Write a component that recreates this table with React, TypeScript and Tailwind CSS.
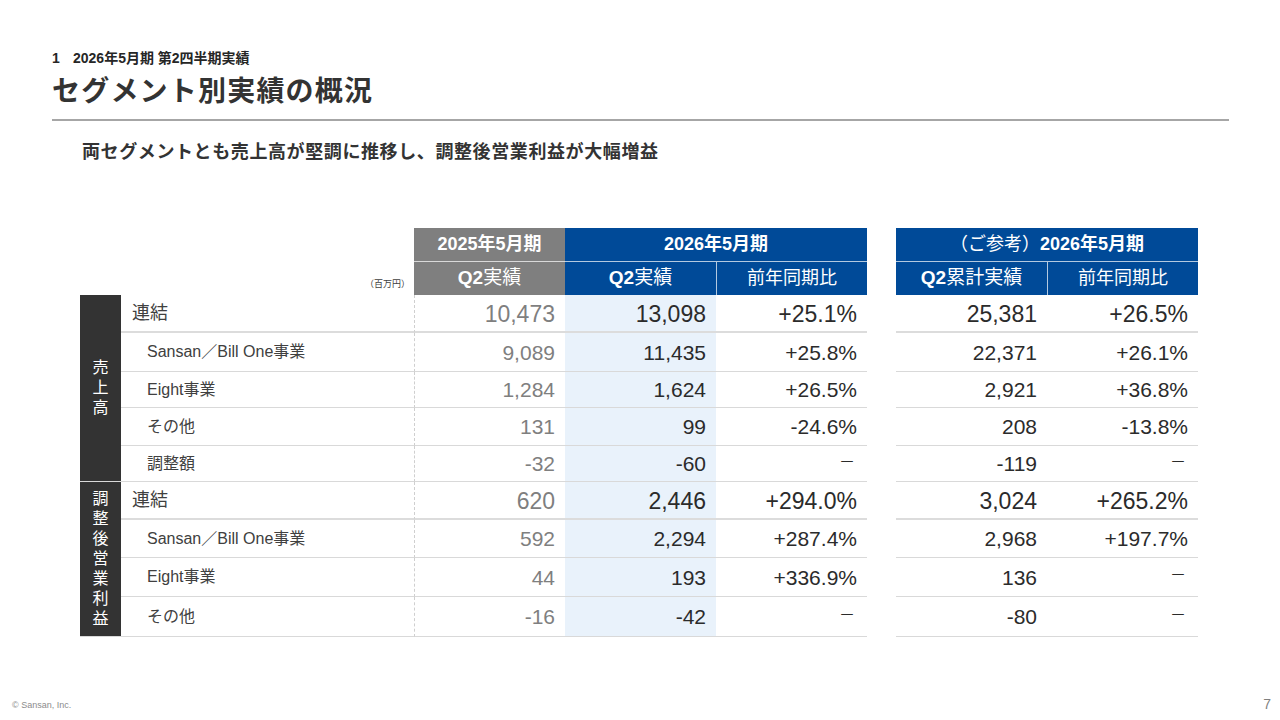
const font = { fontFamily: '"Liberation Sans", "Noto Sans CJK JP", sans-serif' };

type Row = {
  label: string;
  main?: boolean;
  h: string;
  v: string[];
};

const sales: Row[] = [
  { label: '連結', main: true, h: 'h-[38px]', v: ['10,473', '13,098', '+25.1%', '25,381', '+26.5%'] },
  { label: 'Sansan／Bill One事業', h: 'h-[39px]', v: ['9,089', '11,435', '+25.8%', '22,371', '+26.1%'] },
  { label: 'Eight事業', h: 'h-[36px]', v: ['1,284', '1,624', '+26.5%', '2,921', '+36.8%'] },
  { label: 'その他', h: 'h-[38px]', v: ['131', '99', '-24.6%', '208', '-13.8%'] },
  { label: '調整額', h: 'h-[36px]', v: ['-32', '-60', '－', '-119', '－'] }
];

const profit: Row[] = [
  { label: '連結', main: true, h: 'h-[38px]', v: ['620', '2,446', '+294.0%', '3,024', '+265.2%'] },
  { label: 'Sansan／Bill One事業', h: 'h-[38px]', v: ['592', '2,294', '+287.4%', '2,968', '+197.7%'] },
  { label: 'Eight事業', h: 'h-[39px]', v: ['44', '193', '+336.9%', '136', '－'] },
  { label: 'その他', h: 'h-[40px]', v: ['-16', '-42', '－', '-80', '－'] }
];

function Val({ text, main, className }: { text: string; main?: boolean; className: string }) {
  const dash = text === '－';
  return (
    <div className={`w-[151px] flex items-center justify-end pr-[10px] ${className}`}>
      {dash ? (
        <span className="text-[16px] mb-[4px] pr-[2px]">－</span>
      ) : (
        <span className={main ? 'text-[23px] pt-[3px]' : 'text-[21px] pt-[1px]'}>{text}</span>
      )}
    </div>
  );
}

function DataRow({ row }: { row: Row }) {
  const line = row.main ? 'border-b-2 border-[#dcdcdc]' : 'border-b border-[#d9d9d9]';
  return (
    <div className={`flex ${row.h}`}>
      <div
        className={`w-[293px] flex items-center ${line} ${
          row.main ? 'pl-[11px] text-[18px]' : 'pl-[26px] text-[16px]'
        } text-[#404040]`}
      >
        {row.label}
      </div>
      <Val
        text={row.v[0]}
        main={row.main}
        className={`${line} border-l border-l-[#cfcfcf] [border-left-style:dashed] text-[#7f7f7f]`}
      />
      <Val text={row.v[1]} main={row.main} className={`${line} bg-[#e9f2fb] text-[#2b2b2b]`} />
      <Val text={row.v[2]} main={row.main} className={`${line} text-[#2b2b2b]`} />
      <div className="w-[29px]" />
      <Val text={row.v[3]} main={row.main} className={`${line} text-[#2b2b2b]`} />
      <Val text={row.v[4]} main={row.main} className={`${line} text-[#2b2b2b]`} />
    </div>
  );
}

function Group({ title, rows }: { title: string; rows: Row[] }) {
  return (
    <div className="flex">
      <div className="w-[41px] bg-[#333333] border-b border-[#d9d9d9] flex items-center justify-center">
        <div className="flex flex-col items-center text-white text-[16px] leading-[20px]">
          {title.split('').map((c, i) => (
            <span key={i}>{c}</span>
          ))}
        </div>
      </div>
      <div className="flex flex-col">
        {rows.map((r, i) => (
          <DataRow key={i} row={r} />
        ))}
      </div>
    </div>
  );
}

export default function App() {
  return (
    <div style={font} className="w-[1280px] h-[720px] bg-white flex flex-col text-[#333333] overflow-hidden">
      <div className="pt-[49px] pl-[52px] pr-[51px]">
        <div className="text-[14px] leading-[18px] font-bold text-[#262626] flex">
          <span className="w-[21px]">1</span>
          <span>2026年5月期 第2四半期実績</span>
        </div>
        <h1 className="mt-[7px] text-[28px] leading-[36px] font-bold tracking-[1.2px] text-[#333333]">
          セグメント別実績の概況
        </h1>
        <div className="mt-[9px] h-[2px] bg-[#a6a6a6]" />
        <p className="mt-[19px] ml-[30px] text-[18px] leading-[24px] font-bold tracking-[0.6px] text-[#333333]">
          両セグメントとも売上高が堅調に推移し、調整後営業利益が大幅増益
        </p>

        <div className="mt-[64px] ml-[28px] flex flex-col">
          <div className="flex text-white">
            <div className="w-[334px] flex items-end justify-end pr-[4px] pb-[4px] text-[9px] text-[#404040]">
              （百万円）
            </div>
            <div className="w-[151px] flex flex-col bg-[#7f7f7f]">
              <div className="h-[33px] flex items-center justify-center text-[18px] font-bold">2025年5月期</div>
              <div className="h-[1px] bg-white/70" />
              <div className="h-[33px] flex items-center justify-center text-[19px]">
                <span className="font-bold">Q2</span>実績
              </div>
            </div>
            <div className="w-[302px] flex flex-col bg-[#004a98]">
              <div className="h-[33px] flex items-center justify-center text-[18px] font-bold">2026年5月期</div>
              <div className="h-[1px] bg-white/70" />
              <div className="h-[33px] flex">
                <div className="w-[151px] flex items-center justify-center text-[19px]">
                  <span className="font-bold">Q2</span>実績
                </div>
                <div className="w-[151px] border-l border-white/70 flex items-center justify-center text-[18px]">
                  前年同期比
                </div>
              </div>
            </div>
            <div className="w-[29px]" />
            <div className="w-[302px] flex flex-col bg-[#004a98]">
              <div className="h-[33px] flex items-center justify-center text-[18px] font-bold">
                <span className="font-normal">（ご参考）</span>2026年5月期
              </div>
              <div className="h-[1px] bg-white/70" />
              <div className="h-[33px] flex">
                <div className="w-[151px] flex items-center justify-center text-[19px]">
                  <span className="font-bold">Q2</span>累計実績
                </div>
                <div className="w-[151px] border-l border-white/70 flex items-center justify-center text-[18px]">
                  前年同期比
                </div>
              </div>
            </div>
          </div>
          <Group title="売上高" rows={sales} />
          <Group title="調整後営業利益" rows={profit} />
        </div>
      </div>

      <div className="mt-auto flex items-center justify-between h-[26px] pl-[12px] pr-[9px] pb-[2px]">
        <span className="text-[9px] text-[#8c8c8c]">© Sansan,  Inc.</span>
        <span className="text-[14px] text-[#7f7f7f] mb-[4px]">7</span>
      </div>
    </div>
  );
}
